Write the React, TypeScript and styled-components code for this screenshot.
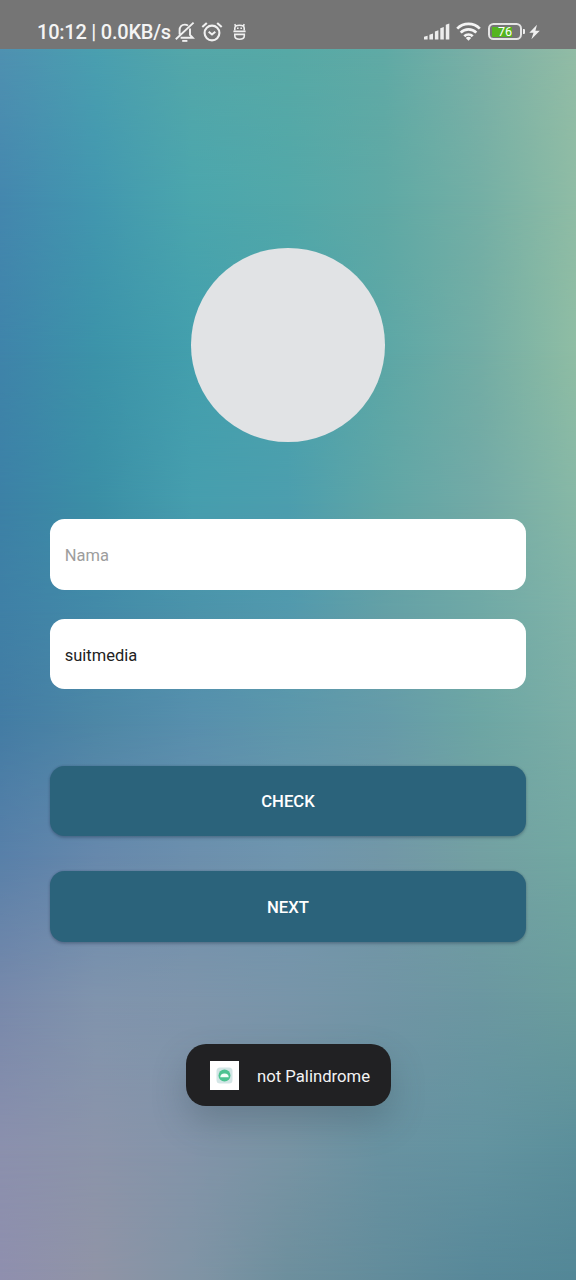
import React from "react";
import styled, { createGlobalStyle } from "styled-components";

const GlobalStyle = createGlobalStyle`
  * { box-sizing: border-box; }
  body { margin: 0; font-family: Roboto, "Liberation Sans", sans-serif; }
`;

/* Rows of the mesh background: vertical position and the colours across it. */
const meshRows: { y: number; colors: string[] }[] = [
  { y: 50, colors: ["#4f91b1", "#4a9fb0", "#54a7a9", "#57a9a6", "#60aaa5", "#7bb0a6", "#92bca5"] },
  { y: 200, colors: ["#4487ae", "#4297af", "#4ba6ad", "#52a8a9", "#5fa9a5", "#74afa5", "#8fbca5"] },
  { y: 350, colors: ["#3f84aa", "#3c93a9", "#439fad", "#4aa3ab", "#5ca7a6", "#73ada5", "#8fbda4"] },
  { y: 500, colors: ["#3c81a6", "#3b8fa6", "#469eae", "#4c9eae", "#60a6a6", "#73aaa6", "#87b8a6"] },
  { y: 610, colors: ["#3f80a6", "#438aa8", "#4b93aa", "#5299ad", "#64a0a6", "#70a9a6", "#80b3a8"] },
  { y: 720, colors: ["#437ca4", "#4d87a6", "#578fad", "#5d97ab", "#659ba9", "#6da6a4", "#7baea6"] },
  { y: 855, colors: ["#5880a9", "#6688ac", "#6c8fad", "#6f95ae", "#7297a7", "#73a0a2", "#72a8a2"] },
  { y: 1000, colors: ["#7889ab", "#8094ad", "#7e95ab", "#7895a9", "#7195a5", "#6b97a1", "#6a9d9d"] },
  { y: 1150, colors: ["#8b90ad", "#8b94aa", "#8394a9", "#7894a4", "#6892a1", "#6393a0", "#5b8f9b"] },
  { y: 1280, colors: ["#8f8fae", "#9094a6", "#8094a5", "#6d8f9d", "#628c9b", "#578899", "#538797"] },
];

const Screen = styled.div`
  display: grid;
  width: 576px;
  height: 1280px;
  overflow: hidden;
`;

const MeshRow = styled.div<{ $colors: string[]; $from: number; $to: number }>`
  grid-area: 1 / 1;
  background: linear-gradient(to right, ${(p) => p.$colors.join(", ")});
  ${(p) =>
    p.$to > p.$from
      ? `mask-image: linear-gradient(to bottom, transparent ${p.$from}px, #000 ${p.$to}px);`
      : ""}
`;

const Page = styled.div`
  grid-area: 1 / 1;
  z-index: 1;
  display: flex;
  flex-direction: column;
  align-items: center;
`;

const StatusBar = styled.header`
  width: 100%;
  height: 48.5px;
  flex: none;
  display: flex;
  align-items: center;
  justify-content: space-between;
  padding: 15px 36px 0 37px;
  background: #757575;
  color: #f4f4f4;
`;

const StatusGroup = styled.div`
  display: flex;
  align-items: center;
  height: 33px;
`;

const StatusItem = styled.span<{ $left: number }>`
  display: flex;
  margin-left: ${(p) => p.$left}px;
`;

const Clock = styled.span`
  width: 134px;
  padding-top: 1px;
  font-size: 20px;
  line-height: 33px;
  font-weight: 500;
  letter-spacing: -0.23px;
  white-space: nowrap;
`;

const Avatar = styled.div`
  width: 193.6px;
  height: 193.6px;
  margin-top: 199.5px;
  flex: none;
  border-radius: 50%;
  background: #e1e3e5;
`;

const Form = styled.form`
  display: flex;
  flex-direction: column;
  width: 476.5px;
  margin-top: 77.8px;
`;

const Field = styled.input`
  height: 70.4px;
  border: 0;
  border-radius: 14.5px;
  outline: 0;
  padding: 2.6px 15px 0;
  background: #fff;
  color: #222;
  font: 400 16.5px Roboto, sans-serif;
  &::placeholder { color: #9d9d9d; opacity: 1; }
  & + & { margin-top: 29px; }
`;

const Actions = styled.div`
  display: flex;
  flex-direction: column;
  gap: 35px;
  margin-top: 76.8px;
`;

const ActionButton = styled.button`
  height: 70.4px;
  border: 0;
  border-radius: 14.5px;
  padding: 1.6px 0 0;
  background: #2b637b;
  color: #fff;
  font: 500 16.7px Roboto, sans-serif;
  box-shadow: 0 1.5px 3px rgba(30, 45, 70, 0.3), 0 0 2px rgba(30, 45, 70, 0.18);
`;

const Toast = styled.div`
  display: flex;
  align-items: center;
  width: 205px;
  height: 62.5px;
  margin-top: 102.2px;
  padding-left: 24px;
  gap: 18.5px;
  border-radius: 20px;
  background: #212123;
  color: #f3f3f3;
  font-size: 16.7px;
  white-space: nowrap;
  box-shadow: 0 16px 34px rgba(50, 70, 80, 0.28);
`;

const ToastText = styled.span`
  padding-top: 2px;
`;

function BellOff() {
  return (
    <svg width="20" height="22" viewBox="0 0 20 22" fill="none" stroke="#f0f0f0" strokeWidth="1.9">
      <path d="M4.6 13.6V9.2C4.6 5.8 6.6 3.6 9.8 3.6c1.3 0 2.4.3 3.2 1M15 7.6v6.2l2.8 3H5.6M.8 18.2 18.6 1.6" />
      <path d="M7.2 19.9h5.2" />
    </svg>
  );
}

function AlarmIcon() {
  return (
    <svg width="22" height="22" viewBox="0 0 22 22" fill="none" stroke="#f0f0f0" strokeWidth="2.1">
      <circle cx="11" cy="12" r="7.4" />
      <path d="M1.3 6 5.8 2M20.7 6l-4.5-4M7.7 10.8l3.3 2.7 3.3-2.7" />
    </svg>
  );
}

function DebugIcon() {
  return (
    <svg width="13" height="18" viewBox="0 0 13 18" fill="none" stroke="#f0f0f0" strokeWidth="1.6">
      <path d="M1.8 7.6V5.2C1.8 3.3 3.6 2.3 6.5 2.3s4.7 1 4.7 2.9v2.4M2.7 2.8 1.6 1.2M10.3 2.8l1.1-1.6" />
      <path d="M.4 8.4h12.2M1.8 11.4h9.5v1.4c0 2.4-1.9 3.5-4.8 3.5s-4.7-1.1-4.7-3.5z" />
      <path d="M4 5.3h1.6M7.4 5.3H9" />
    </svg>
  );
}

function SignalIcon() {
  return (
    <svg width="26" height="17" viewBox="0 0 26 17" fill="#ededed">
      <path d="M0 13.7 3.6 12.8V16.6H0zM5.4 11.8 9 10.6V16.6H5.4zM10.9 8.5 14.4 7.3V16.6H10.9zM16.3 5.2 19.8 4V16.6H16.3zM21.8 1.8 25.3.6V16.6H21.8z" />
    </svg>
  );
}

function WifiIcon() {
  return (
    <svg width="25" height="19" viewBox="0 0 25 19" fill="none" stroke="#f4f4f4" strokeWidth="2.7">
      <path d="M1.2 6.6a16 16 0 0 1 22.6 0M4.7 10.6a11 11 0 0 1 15.6 0M8.3 14.2a6 6 0 0 1 8.4 0" />
      <path d="M12.5 18.8 9.8 16a3.9 3.9 0 0 1 5.4 0z" fill="#f4f4f4" stroke="none" />
    </svg>
  );
}

const BatteryWrap = styled.div`
  display: flex;
  align-items: center;
  gap: 1px;
`;

const BatteryShell = styled.div`
  width: 34px;
  height: 17px;
  border: 2px solid #e4e4e4;
  border-radius: 5.5px;
  font-size: 12.5px;
  font-weight: 400;
  line-height: 14px;
  text-align: center;
  color: #fff;
  background: linear-gradient(to right, #55b51f 20px, transparent 20px) 1.5px 1.5px / 27px 10px no-repeat;
`;

const BatteryTip = styled.div`
  width: 2px;
  height: 5px;
  border-radius: 0 1px 1px 0;
  background: #eee;
`;

function BoltIcon() {
  return (
    <svg width="11" height="16" viewBox="0 0 11 16" fill="#f0f0f0">
      <path d="M8 0.8 0.3 8.8h4.2L2.4 15.2 10.8 6.8H6.4z" />
    </svg>
  );
}

function AppIcon() {
  return (
    <svg width="29" height="29" viewBox="0 0 29 29">
      <rect width="29" height="29" fill="#fff" />
      <rect x="6.5" y="6.5" width="16" height="16" rx="3.5" fill="#d3e6e6" />
      <circle cx="14.5" cy="14.5" r="6" fill="#4dc391" />
      <path d="M10.3 16.2a4.2 3.8 0 0 1 8.4 0z" fill="#f3fff8" />
    </svg>
  );
}

export default function App() {
  return (
    <Screen>
      <GlobalStyle />
      {meshRows.map((row, i) => (
        <MeshRow key={row.y} $colors={row.colors} $from={i ? meshRows[i - 1].y : 0} $to={i ? row.y : 0} />
      ))}
      <Page>
        <StatusBar>
          <StatusGroup>
            <Clock>10:12 | 0.0KB/s</Clock>
            <StatusItem $left={4}><BellOff /></StatusItem>
            <StatusItem $left={6}><AlarmIcon /></StatusItem>
            <StatusItem $left={10}><DebugIcon /></StatusItem>
          </StatusGroup>
          <StatusGroup>
            <StatusItem $left={0}><SignalIcon /></StatusItem>
            <StatusItem $left={6}><WifiIcon /></StatusItem>
            <StatusItem $left={7}>
              <BatteryWrap>
                <BatteryShell>76</BatteryShell>
                <BatteryTip />
              </BatteryWrap>
            </StatusItem>
            <StatusItem $left={4}><BoltIcon /></StatusItem>
          </StatusGroup>
        </StatusBar>
        <Avatar />
        <Form>
          <Field placeholder="Nama" />
          <Field defaultValue="suitmedia" />
          <Actions>
            <ActionButton type="button">CHECK</ActionButton>
            <ActionButton type="button">NEXT</ActionButton>
          </Actions>
        </Form>
        <Toast role="status">
          <AppIcon />
          <ToastText>not Palindrome</ToastText>
        </Toast>
      </Page>
    </Screen>
  );
}
